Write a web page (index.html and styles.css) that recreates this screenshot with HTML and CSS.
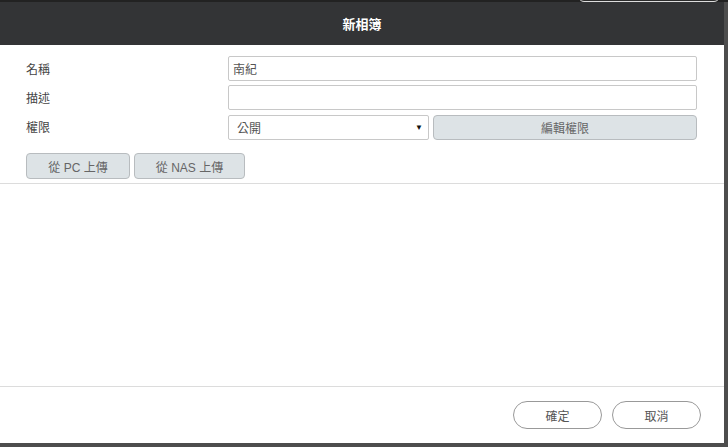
FILE: index.html
```html
<!DOCTYPE html>
<html lang="zh-Hant">
<head>
    <meta charset="UTF-8">
    <title>新相簿</title>
    <link rel="stylesheet" href="styles.css">
</head>
<body>
    <div class="topbar"><div class="topbar-pill"></div></div>
    <div class="dialog">
        <div class="dialog-header">新相簿</div>
        <div class="form">
            <label class="form-label">名稱</label>
            <input type="text" class="form-input" value="南紀">
            <label class="form-label">描述</label>
            <input type="text" class="form-input" value="">
            <label class="form-label">權限</label>
            <div class="perm-row">
                <div class="select"><span>公開</span><span class="select-arrow">&#9660;</span></div>
                <button class="gray-button">編輯權限</button>
            </div>
        </div>
        <div class="upload-row">
            <button class="gray-button upload-pc">從 PC 上傳</button>
            <button class="gray-button upload-nas">從 NAS 上傳</button>
        </div>
        <div class="photo-area"></div>
        <div class="dialog-footer">
            <button class="round-button">確定</button>
            <button class="round-button">取消</button>
        </div>
    </div>
</body>
</html>
```

FILE: styles.css
```css
body, html {
    margin: 0;
    padding: 0;
    background-color: #4d4d4d;
    font-family: 'Liberation Sans', 'Noto Sans CJK TC', sans-serif;
    font-size: 12px;
    color: #444;
}
.topbar {
    height: 2px;
    background-color: #222;
    overflow: hidden;
}
.topbar-pill {
    width: 140px;
    height: 10px;
    margin: -10px 0 0 578px;
    border: 1px solid #ddd;
    border-radius: 6px;
    background-color: #2c2c2c;
}
.dialog {
    width: 724px;
    height: 441px;
    background-color: #fff;
    display: flex;
    flex-direction: column;
}
.dialog-header {
    height: 43px;
    background-color: #333436;
    color: #fff;
    font-size: 13px;
    font-weight: bold;
    display: flex;
    align-items: center;
    justify-content: center;
}
.form {
    display: grid;
    grid-template-columns: 202px 1fr;
    row-gap: 4px;
    padding: 11px 27px 0 26px;
}
.form-label {
    display: flex;
    align-items: center;
    height: 25px;
}
.form-input {
    box-sizing: border-box;
    height: 25px;
    margin: 0;
    padding: 0 4px;
    border: 1px solid #c8c8c8;
    border-radius: 2px;
    font: inherit;
    color: #555;
}
.perm-row {
    display: flex;
    gap: 4px;
    margin-top: 1px;
}
.select {
    box-sizing: border-box;
    width: 201px;
    height: 25px;
    border: 1px solid #c8c8c8;
    border-radius: 2px;
    display: flex;
    align-items: center;
    justify-content: space-between;
    padding: 0 5px 0 8px;
    color: #555;
}
.select-arrow {
    font-size: 8px;
    color: #111;
}
.gray-button {
    box-sizing: border-box;
    height: 25px;
    margin: 0;
    background-color: #dde3e6;
    border: 1px solid #b8bcbf;
    border-radius: 4px;
    font: inherit;
    color: #666;
    cursor: pointer;
}
.perm-row .gray-button {
    flex: 1;
}
.upload-row {
    display: flex;
    gap: 4px;
    padding: 13px 0 4px 26px;
    border-bottom: 1px solid #dcdcdc;
}
.upload-row .gray-button {
    height: 26px;
}
.upload-pc {
    width: 104px;
}
.upload-nas {
    width: 111px;
}
.photo-area {
    flex: 1;
    border-bottom: 1px solid #dcdcdc;
}
.dialog-footer {
    height: 56px;
    display: flex;
    justify-content: flex-end;
    align-items: flex-start;
    gap: 10px;
    padding: 14px 23px 0 0;
    box-sizing: border-box;
}
.round-button {
    width: 89px;
    height: 28px;
    background-color: #fff;
    border: 1px solid #999;
    border-radius: 14px;
    font: inherit;
    color: #555;
    cursor: pointer;
}
```
